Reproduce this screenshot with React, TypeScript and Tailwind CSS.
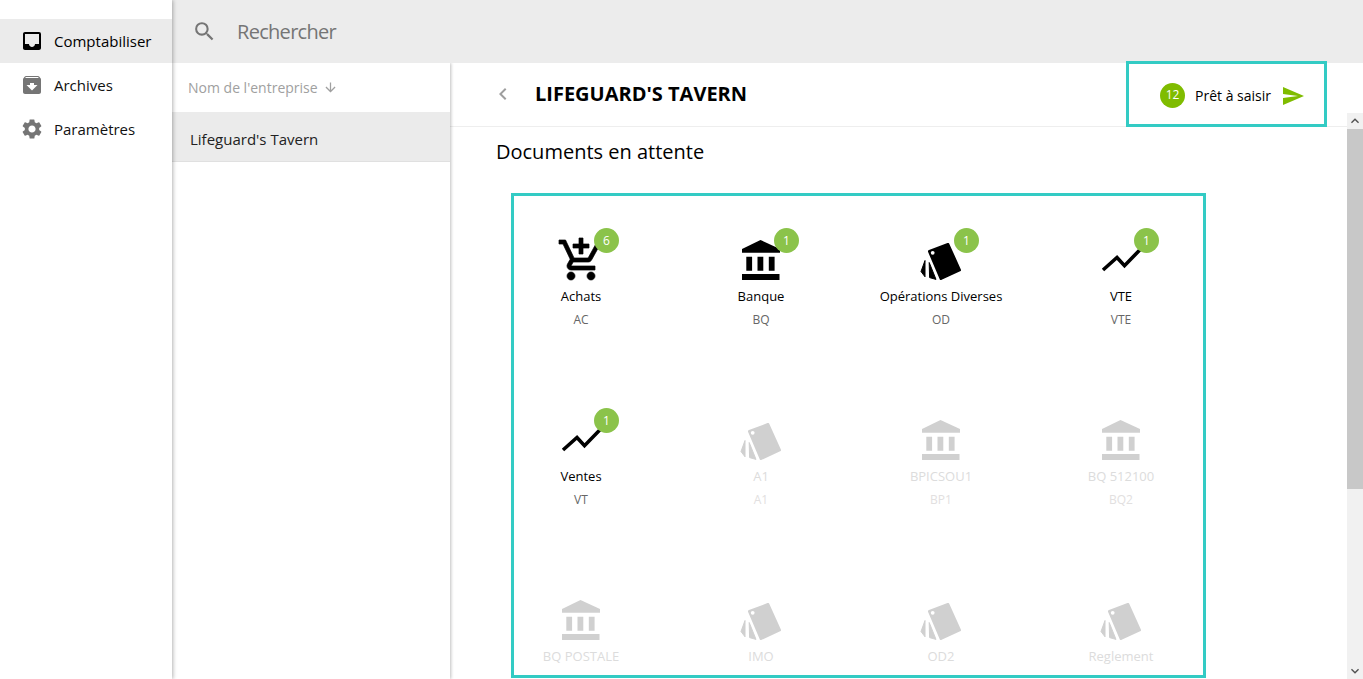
import React from "react";
import { MdInbox, MdArchive, MdSettings, MdSearch, MdSend, MdArrowDownward, MdChevronLeft, MdKeyboardArrowUp, MdKeyboardArrowDown } from "react-icons/md";

function Cart({ className }: { className: string }) {
  return (
    <svg viewBox="0 0 24 24" className={className} fill="currentColor" stroke="currentColor" strokeWidth="0.35">
      <path d="M11 9h2V6h3V4h-3V1h-2v3H8v2h3v3zm-4 9c-1.1 0-1.99.9-1.99 2S5.9 22 7 22s2-.9 2-2-.9-2-2-2zm10 0c-1.1 0-1.99.9-1.99 2s.89 2 1.99 2 2-.9 2-2-.9-2-2-2zm-9.83-3.25l.03-.12.9-1.63h7.45c.75 0 1.41-.41 1.75-1.03l3.86-7.01L19.42 4h-.01l-1.1 2-2.76 5H8.53l-.13-.27L6.16 6l-.95-2-.94-2H1v2h2l3.6 7.59-1.35 2.45c-.16.28-.25.61-.25.96 0 1.1.9 2 2 2h12v-2H7.42c-.13 0-.25-.11-.25-.25z" />
    </svg>
  );
}

function Swatch({ className }: { className: string }) {
  return (
    <svg viewBox="0 0 41 37" className={className} fill="currentColor" stroke="currentColor" strokeLinejoin="round">
      <path strokeWidth="3" d="M9.5 8.5 28 1.5 39.5 27 21 35.5Z" />
      <circle cx="12.7" cy="9.8" r="1.9" fill="#ffffff" stroke="none" />
      <path strokeWidth="1" d="M5 17.5 1 28.5 5 33.8Z" />
      <path strokeWidth="1" d="M9.2 19.5 16 36.4 9.6 34.6Z" />
    </svg>
  );
}

function Bank({ className }: { className: string }) {
  return (
    <svg viewBox="0 0 38 40" className={className} fill="currentColor">
      <path d="M18.5 0 38 9v3.7H0V9Z" />
      <path d="M4.3 16.7h5.8v14H4.3ZM15.5 16.7h5.8v14h-5.8ZM26.8 16.7h5.8v14h-5.8ZM0 34h37.5v6H0Z" />
    </svg>
  );
}

function Trend({ className }: { className: string }) {
  return (
    <svg viewBox="0 0 40 26" className={className} fill="none" stroke="currentColor" strokeWidth="3.6">
      <path d="M2 23 16 10.5l7.5 8.2L39 2.7" />
    </svg>
  );
}

type Kind = "cart" | "bank" | "swatch" | "trend";

function JournalIcon({ kind, className }: { kind: Kind; className: string }) {
  if (kind === "cart") return <Cart className={`-mb-[4px] h-[48px] w-[48px] ${className}`} />;
  if (kind === "bank") return <Bank className={`-ml-[1px] h-[40px] w-[38px] ${className}`} />;
  if (kind === "swatch") return <Swatch className={`-ml-[1px] h-[37px] w-[41px] ${className}`} />;
  return <Trend className={`mb-[7px] h-[26px] w-[40px] ${className}`} />;
}

const items: { name: string; code?: string; kind: Kind; count?: number }[] = [
  { name: "Achats", code: "AC", kind: "cart", count: 6 },
  { name: "Banque", code: "BQ", kind: "bank", count: 1 },
  { name: "Opérations Diverses", code: "OD", kind: "swatch", count: 1 },
  { name: "VTE", code: "VTE", kind: "trend", count: 1 },
  { name: "Ventes", code: "VT", kind: "trend", count: 1 },
  { name: "A1", code: "A1", kind: "swatch" },
  { name: "BPICSOU1", code: "BP1", kind: "bank" },
  { name: "BQ 512100", code: "BQ2", kind: "bank" },
  { name: "BQ POSTALE", kind: "bank" },
  { name: "IMO", kind: "swatch" },
  { name: "OD2", kind: "swatch" },
  { name: "Reglement", kind: "swatch" },
];

function Cell({ item }: { item: (typeof items)[number] }) {
  const active = item.count !== undefined;
  return (
    <div className="flex h-[180px] w-[180px] flex-col items-center">
      <div className="relative flex h-[60px] w-[60px] items-end justify-center">
        <JournalIcon kind={item.kind} className={active ? "text-black" : "text-[#d0d0d0]"} />
        {active && (
          <span className="absolute left-[43px] top-[8px] flex h-[25px] w-[25px] items-center justify-center rounded-full bg-[#8bc34a] text-xs text-white">
            {item.count}
          </span>
        )}
      </div>
      <div className={`mt-[6px] whitespace-nowrap text-[13px] leading-[20px] ${active ? "text-black" : "text-[#dcdcdc]"}`}>{item.name}</div>
      {item.code && (
        <div className={`mt-[4px] text-xs leading-[20px] ${active ? "text-[#666666]" : "text-[#e2e0e0]"}`}>{item.code}</div>
      )}
    </div>
  );
}

function Nav({ icon, label, active }: { icon: React.ReactNode; label: string; active?: boolean }) {
  return (
    <div className={`flex h-[44px] items-center gap-[10px] pl-[20px] text-[15px] ${active ? "bg-[#ebebeb] text-black" : "text-[#111111]"}`}>
      {icon}
      <span>{label}</span>
    </div>
  );
}

export default function App() {
  return (
    <div className="relative flex h-[679px] w-[1363px] overflow-hidden bg-white font-['Open_Sans',sans-serif]">
      <aside className="z-20 h-full w-[172px] shrink-0 bg-white pt-[19px] shadow-[1px_0_4px_rgba(0,0,0,0.3)]">
        <Nav active label="Comptabiliser" icon={<MdInbox className="h-[24px] w-[24px] text-black" />} />
        <Nav label="Archives" icon={<MdArchive className="h-[24px] w-[24px] text-[#757575]" />} />
        <Nav label="Paramètres" icon={<MdSettings className="h-[24px] w-[24px] text-[#757575]" />} />
      </aside>
      <div className="flex min-w-0 flex-1 flex-col">
        <header className="relative z-[15] flex h-[63px] shrink-0 items-center bg-[#ececec] pl-[20px] text-[#757575]">
          <MdSearch className="h-[25px] w-[25px]" />
          <span className="ml-[20px] text-xl tracking-[-0.7px]">Rechercher</span>
        </header>
        <div className="flex min-h-0 flex-1">
          <section className="z-10 w-[278px] shrink-0 bg-white shadow-[1px_0_3px_rgba(0,0,0,0.25)]">
            <div className="flex h-[49px] items-center pl-[16px] text-sm text-[#a0a0a0]">
              <span>Nom de l'entreprise</span>
              <MdArrowDownward className="ml-[5px] h-[15px] w-[15px]" />
            </div>
            <div className="flex h-[50px] items-center border-b border-[#e0e0e0] bg-[#ebebeb] pl-[18px] pt-[6px] text-[15px] text-[#222222]">
              Lifeguard's Tavern
            </div>
          </section>
          <main className="flex min-w-0 flex-1 flex-col">
            <div className="flex h-[64px] shrink-0 items-center border-b border-[#eeeeee] pb-[2px] pl-[42px]">
              <MdChevronLeft className="-ml-[1px] h-[24px] w-[24px] text-[#9e9e9e]" />
              <h1 className="ml-[20px] text-xl font-bold text-black">LIFEGUARD'S TAVERN</h1>
            </div>
            <div className="flex min-h-0 flex-1">
              <div className="min-w-0 flex-1 overflow-hidden pl-[46px]">
                <h2 className="mt-[12px] text-xl leading-[26px] text-black">Documents en attente</h2>
                <div className="ml-[15px] mt-[28px] h-[485px] w-[695px] overflow-hidden border-[3px] border-[#33cbc4]">
                  <div className="ml-[-23px] grid grid-cols-[repeat(4,180px)] pt-[24px]">
                    {items.map((it) => (
                      <Cell key={it.name} item={it} />
                    ))}
                  </div>
                </div>
              </div>
              <div className="-mt-[14px] flex w-[16px] shrink-0 flex-col bg-[#f1f1f1]">
                <div className="flex h-[16px] items-center justify-center text-[#505050]">
                  <MdKeyboardArrowUp className="h-[16px] w-[16px]" />
                </div>
                <div className="h-[360px] bg-[#c8c8c8]" />
                <div className="flex-1" />
                <div className="flex h-[16px] items-center justify-center text-[#505050]">
                  <MdKeyboardArrowDown className="h-[16px] w-[16px]" />
                </div>
              </div>
            </div>
          </main>
        </div>
      </div>
      <div className="absolute left-[1126px] top-[61px] z-30 flex h-[66px] w-[201px] items-center border-[3px] border-[#33cbc4] bg-white pl-[31px] pt-[2px]">
        <span className="flex h-[25px] w-[25px] items-center justify-center rounded-full bg-[#7fbc00] text-xs text-white">12</span>
        <span className="ml-[10px] pt-[2px] text-sm text-black">Prêt à saisir</span>
        <MdSend className="ml-[10px] mt-[1px] h-[24px] w-[24px] text-[#7fbc00]" />
      </div>
    </div>
  );
}
